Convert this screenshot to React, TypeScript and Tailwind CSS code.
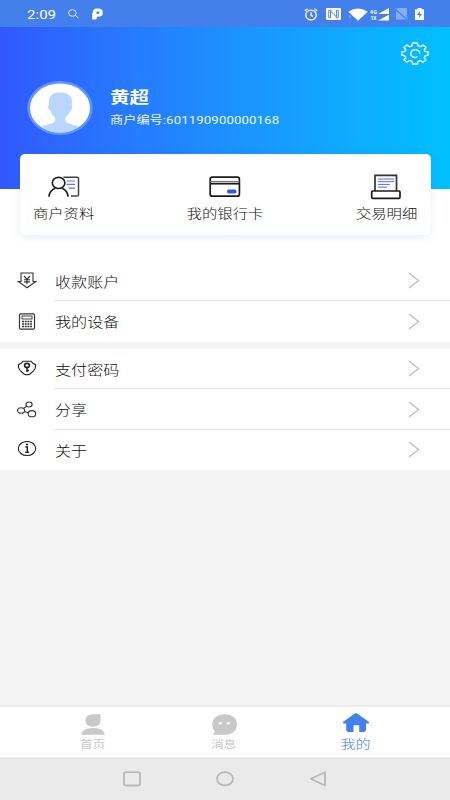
import type { ReactNode } from "react";
import clsx from "clsx";

function ClockIcon() {
  return (
    <svg width="14" height="13" viewBox="0 0 14 13" fill="none" stroke="currentColor" strokeWidth="1.3">
      <ellipse cx="7" cy="7" rx="5.3" ry="4.9" />
      <path d="M7 4.3V7.3L9 8.4M0.8 2.8L3.6 0.7M13.2 2.8L10.4 0.7" />
    </svg>
  );
}

function NfcIcon() {
  return (
    <svg width="15" height="12" viewBox="0 0 15 12">
      <rect width="15" height="12" rx="1" fill="currentColor" />
      <path d="M5.5 2.3H2.8V9.8H4.6V3.2L10.4 8.8V2.3H12.2V9.8H9.5" fill="none" stroke="#4380ec" strokeWidth="1" />
    </svg>
  );
}

function SignalIcon() {
  return (
    <svg width="20" height="13" viewBox="0 0 20 13" fill="currentColor">
      <path d="M19 0V6H8zM19 6.8V12.6H8z" />
      <text x="0" y="5.6" fontSize="5" fontWeight="700" fontFamily="Roboto, sans-serif" textLength="7">
        4G
      </text>
      <text x="0.5" y="12.2" fontSize="5" fontWeight="700" fontFamily="Roboto, sans-serif" textLength="6">
        1X
      </text>
    </svg>
  );
}

function StatusBar() {
  return (
    <div className="flex h-[27px] shrink-0 items-center bg-[#4380ec] pl-[27px] pr-[26px] pt-px text-white">
      <span className="w-[29px] origin-left scale-x-[1.16] font-[Roboto,sans-serif] text-[13px] leading-none">2:09</span>
      <svg className="ml-3 opacity-80" width="11" height="10" viewBox="0 0 11 10" fill="none" stroke="currentColor">
        <ellipse cx="4.4" cy="4" rx="3.8" ry="3.3" />
        <path d="M7.2 6.2L10.4 9" />
      </svg>
      <svg className="ml-[13px]" width="11" height="12" viewBox="0 0 11 12" fill="currentColor" fillRule="evenodd">
        <path d="M.6 5Q.6.5 5 .5H6Q10.8.5 10.8 4.7Q10.8 8.8 6.2 8.8H4.8V10Q4.8 11.5 2.6 11.5H.2V7.5Q.2 5.4 .6 5zM4.6 3.6V6H6Q7.5 6 7.5 4.8Q7.5 3.6 6 3.6z" />
      </svg>
      <div className="ml-auto flex items-center">
        <ClockIcon />
        <span className="ml-2">
          <NfcIcon />
        </span>
        <svg className="ml-[7px]" width="20" height="13" viewBox="0 0 20 13" fill="currentColor">
          <path d="M0.3 3.8Q10-3 19.7 3.8L10 12.7z" />
          <path d="M1 7.5L2.5 8.8L1 10.2" fill="none" stroke="currentColor" strokeWidth=".7" opacity=".6" />
        </svg>
        <span className="ml-0.5">
          <SignalIcon />
        </span>
        <svg className="ml-[5px]" width="13" height="12" viewBox="0 0 13 12">
          <path d="M3 0H12V11.5H1V2z" fill="#85adf3" />
          <path d="M0 .8L12.5 12" stroke="#4380ec" strokeWidth="1.6" />
          <path d="M.5 0L13 11.2" stroke="#85adf3" strokeWidth=".8" />
        </svg>
        <svg className="ml-[7px]" width="9" height="12" viewBox="0 0 9 12">
          <path d="M0 1.2H2.5V0H6.5V1.2H9V12H0z" fill="currentColor" />
          <path d="M5 3L2 7H4.3L4 9.8L7 5.8H4.8z" fill="#4380ec" />
        </svg>
      </div>
    </div>
  );
}

function GearIcon() {
  return (
    <svg width="28" height="23" viewBox="0 0 28 23" preserveAspectRatio="none" fill="none" stroke="white" strokeWidth="1.3" strokeLinejoin="round">
      <path d="M11.6 1H16.4L17 3.8L19.6 4.7L22 3L25 5.5L23.2 7.9L24.2 9.4L27.2 10V13L24.2 13.8L23.2 15.6L25 17.8L22 20.2L19.6 18.5L17 19.4L16.4 22H11.6L11 19.4L8.4 18.5L6 20.2L3 17.8L4.8 15.6L3.8 13.8L.8 13V10L3.8 9.4L4.8 7.9L3 5.5L6 3L8.4 4.8L11 3.8z" />
      <path d="M16.5 14.8Q14 16.3 11.4 14.6Q8.9 12.8 10 10.2Q11.2 7.6 14.5 7.7Q18.8 8.2 18.8 11.8" />
    </svg>
  );
}

function Avatar() {
  return (
    <svg width="66" height="54" viewBox="0 0 66 54">
      <defs>
        <clipPath id="face">
          <ellipse cx="33" cy="27" rx="30" ry="24.5" />
        </clipPath>
      </defs>
      <ellipse cx="33" cy="27" rx="32.7" ry="27" fill="#5f95fb" />
      <ellipse cx="33" cy="27" rx="30" ry="24.5" fill="white" />
      <path
        clipPath="url(#face)"
        fill="#b9d6fe"
        d="M22 21Q22 11.5 33 11.5Q45 11.5 45 21L44.5 24Q46 25 45 27.5L43.5 30Q41.5 34.5 38.5 36Q38 41 40.5 42L50 45Q54 47 55 54H11Q12 47 16 45L26 42Q29 41 28 36Q25 34.5 23.5 30L21.5 28Q20.5 25 22 24z"
      />
    </svg>
  );
}

function ProfileIcon() {
  return (
    <svg width="32" height="22" viewBox="0 0 32 22" fill="none" stroke="#222" strokeWidth="1.7">
      <ellipse cx="10.6" cy="6.9" rx="6.3" ry="5.6" />
      <path d="M1 20.7Q1.5 14.5 7.2 12.3M14 12.3Q19.6 14.5 20 20.7" />
      <path d="M15.5 1.3H29Q30.5 1.3 30.5 2.6V18.7Q30.5 20 29 20H23" stroke="#444" strokeWidth="1.5" />
      <path d="M18.5 5H27M18.5 8.4H27M20.5 12.2H27" stroke="#5777fb" strokeWidth="1.2" />
    </svg>
  );
}

function BankCardIcon() {
  return (
    <svg width="32" height="22" viewBox="0 0 32 22" fill="none" stroke="#1c1c1c" strokeWidth="1.7">
      <rect x="1.2" y="1.2" width="29.2" height="19" rx="2" />
      <path d="M1.2 5.6H30.4" stroke="#777" strokeWidth="1.3" />
      <path d="M1.2 7.7H30.4" />
      <rect x="18" y="13.6" width="9.5" height="4" rx="1.8" fill="#3157ea" stroke="none" />
    </svg>
  );
}

function ReceiptIcon() {
  return (
    <svg width="32" height="26" viewBox="0 0 32 26" fill="none" stroke="#1c1c1c" strokeWidth="1.7">
      <path d="M5 17V1.3H26.5V17" stroke="#333" />
      <rect x="1.7" y="17" width="28.3" height="7.3" rx="1" />
      <path d="M8 5H24M8 7.7H24M8 10.4H20M8 13.2H17" stroke="#4d6ffb" strokeWidth="1" />
    </svg>
  );
}

const shortcuts = [
  { label: "商户资料", icon: <ProfileIcon /> },
  { label: "我的银行卡", icon: <BankCardIcon /> },
  { label: "交易明细", icon: <ReceiptIcon /> },
];

// Glyphs are 1.2 times as wide as they are tall
function Label({ className, children }: { className?: string; children: ReactNode }) {
  return <span className={clsx("inline-block scale-x-[1.2] whitespace-nowrap", className)}>{children}</span>;
}

function Header() {
  return (
    <div className="relative h-[162px] shrink-0 bg-linear-to-r from-[#3158ff] to-[#00c0ff]">
      <div className="absolute right-[21px] top-[15px]">
        <GearIcon />
      </div>
      <div className="flex items-center pl-[27px] pt-[54px]">
        <Avatar />
        <div className="ml-[17px] whitespace-nowrap text-white">
          <div className="origin-left scale-x-[1.22] text-[16px] font-bold leading-[22px]">黄超</div>
          <div className="mt-0.5 w-[140px] origin-left scale-x-[1.2] text-[11px] leading-5 text-white/90">
            商户编号<span className="font-[Roboto,sans-serif] tracking-[0.1px]">:601190900000168</span>
          </div>
        </div>
      </div>
      <div className="absolute left-[20px] right-[19px] top-[127px] flex h-[81px] justify-between rounded-[5px] bg-white pl-[18px] pr-[19px] shadow-[0_2px_8px_rgba(60,90,255,0.12)]">
        {shortcuts.map((item) => (
          <div key={item.label} className="flex flex-col items-center pt-[17.5px]">
            <div className="flex h-[31px] items-center justify-center">{item.icon}</div>
            <Label className="text-[12.8px] font-light leading-5 text-[#111]">{item.label}</Label>
          </div>
        ))}
      </div>
    </div>
  );
}

function YuanIcon() {
  return (
    <svg width="20" height="17" viewBox="0 0 20 17" fill="none" stroke="#333" strokeWidth="1.1">
      <path d="M4 1H16V9.5H18.8L10 15.8L1.2 9.5H4z" />
      <path d="M7 4L10 7.2L13 4M10 7V12M7 7.7H13M7 9.9H13" />
    </svg>
  );
}

function DeviceIcon() {
  return (
    <svg width="20" height="17" viewBox="0 0 20 17" fill="none" stroke="#333" strokeWidth="1.2">
      <rect x="2.5" y=".8" width="15" height="15.4" rx="1.5" />
      <rect x="5" y="3" width="10" height="3" strokeWidth=".9" />
      <path d="M5 8.5H15M5 11H15M5 13.5H15" strokeDasharray="2 .7" strokeWidth="1.3" />
    </svg>
  );
}

function PasswordIcon() {
  return (
    <svg width="20" height="17" viewBox="0 0 20 17" fill="none" stroke="#222" strokeWidth="1.1" strokeLinejoin="round">
      <path d="M6 1.2H14L15.5 3L18.6 4.8Q19.1 8 16.5 10.8L13 14Q10 15.6 7 14L3.5 10.8Q.9 8 1.4 4.8L4.5 3z" />
      <ellipse cx="10" cy="5.4" rx="2.4" ry="2" strokeWidth="1.6" />
      <path d="M10 7.2V12M10 10.4H12" strokeWidth="1.5" />
    </svg>
  );
}

function ShareIcon() {
  return (
    <svg width="20" height="17" viewBox="0 0 20 17" fill="none" stroke="#333" strokeWidth="1.1">
      <ellipse cx="12" cy="3.5" rx="3.1" ry="2.5" />
      <ellipse cx="4.1" cy="9.5" rx="3.5" ry="2.8" />
      <ellipse cx="14.9" cy="12.7" rx="3.8" ry="3.1" />
      <path d="M6.5 7.4L9.8 5.2M7.4 10.4L11.2 11.8" />
    </svg>
  );
}

function AboutIcon() {
  return (
    <svg width="20" height="17" viewBox="0 0 20 17" fill="none" stroke="#222" strokeWidth="1.1">
      <ellipse cx="10" cy="7.5" rx="8.7" ry="7" />
      <path d="M8.3 6H10.3V11M8.3 11.2H12" strokeWidth="1.4" />
      <ellipse cx="10" cy="3.6" rx="1.2" ry="1" fill="#222" stroke="none" />
    </svg>
  );
}

function MenuRow({ icon, label, divided }: { icon: ReactNode; label: string; divided?: boolean }) {
  return (
    <div className="flex h-[40.5px] bg-white pl-[17px]">
      <div className="flex w-[37px] items-center">{icon}</div>
      <div className={clsx("flex flex-1 items-center justify-between pl-px pr-[30px]", divided && "border-b border-[#e8e8e8] pt-px")}>
        <Label className="origin-left text-[13.4px] font-light leading-5 text-[#111]">{label}</Label>
        <svg width="12" height="17" viewBox="0 0 12 17" fill="none" stroke="#c2c2c2" strokeWidth="1.5">
          <path d="M1 1L10.5 8.5L1 16" />
        </svg>
      </div>
    </div>
  );
}

function TabBar() {
  return (
    <div className="grid h-[52px] shrink-0 grid-cols-[185px_78px_185px] border-t-2 border-[#ebebeb] bg-white text-[#c9c9c9]">
      <div className="flex flex-col items-center pt-[7px]">
        <svg width="24" height="21" viewBox="0 0 24 21" fill="currentColor">
          <path d="M11.5.3H19.5V6.5Q19.5 12.5 12 12.7Q4.4 12.5 4.4 6.5Q4.4.5 11.5.3zM.3 20.7Q.6 14.2 12 14Q23.4 14.2 23.7 20.7z" />
        </svg>
        <Label className="text-[10.6px] leading-[18px]">首页</Label>
      </div>
      <div className="flex flex-col items-center pt-[7px]">
        <svg width="25" height="21" viewBox="0 0 25 21">
          <path
            d="M12.5.2Q24.8.8 24.8 10.2Q24.8 20.4 12.5 20.7H1L2.8 17.5Q.2 14.5.2 10.2Q.8.8 12.5.2z"
            fill="currentColor"
          />
          <ellipse cx="8.5" cy="9.2" rx="1.6" ry="1.3" fill="white" />
          <ellipse cx="16.5" cy="9.2" rx="1.6" ry="1.3" fill="white" />
        </svg>
        <Label className="text-[10.6px] leading-[18px]">消息</Label>
      </div>
      <div className="flex flex-col items-center pt-[6px] text-[#4380ec]">
        <svg width="28" height="20" viewBox="0 0 28 20" fill="currentColor">
          <path d="M12.8.6Q14 0 15.2.6L27 9Q27.5 10.7 25.7 10.6H24V17Q24 19 21.5 19H17.2V12.3H11.5V19H6.5Q4.2 19 4.2 17V10.6H2.3Q.5 10.7 1 9z" />
        </svg>
        <Label className="text-[12.5px] font-light leading-[22px]">我的</Label>
      </div>
    </div>
  );
}

function NavigationBar() {
  return (
    <div className="flex h-[43px] shrink-0 items-center justify-center gap-[75px] bg-[#eaeaea]">
      <svg width="18" height="16" viewBox="0 0 18 16" fill="none" stroke="#b9b9b9" strokeWidth="1.8">
        <rect x="1" y="1.2" width="16" height="13.3" rx="1.8" />
      </svg>
      <svg width="18" height="16" viewBox="0 0 18 16" fill="none" stroke="#b9b9b9" strokeWidth="1.8">
        <ellipse cx="9" cy="7.8" rx="8" ry="6.6" />
      </svg>
      <svg width="18" height="16" viewBox="0 0 18 16" fill="none" stroke="#b9b9b9" strokeWidth="1.8" strokeLinejoin="round">
        <path d="M1.8 7.8L16 1.2V14.5z" />
      </svg>
    </div>
  );
}

export default function App() {
  return (
    <div className="flex h-[800px] w-[450px] flex-col overflow-hidden bg-[#f4f4f4] font-['Noto_Sans_CJK_SC',sans-serif]">
      <StatusBar />
      <Header />
      <div className="h-[152.5px] shrink-0 bg-white pt-[71.5px]">
        <MenuRow icon={<YuanIcon />} label="收款账户" divided />
        <MenuRow icon={<DeviceIcon />} label="我的设备" />
      </div>
      <div className="mt-[7px]">
        <MenuRow icon={<PasswordIcon />} label="支付密码" divided />
        <MenuRow icon={<ShareIcon />} label="分享" divided />
        <MenuRow icon={<AboutIcon />} label="关于" />
      </div>
      <div className="flex-1" />
      <TabBar />
      <NavigationBar />
    </div>
  );
}
